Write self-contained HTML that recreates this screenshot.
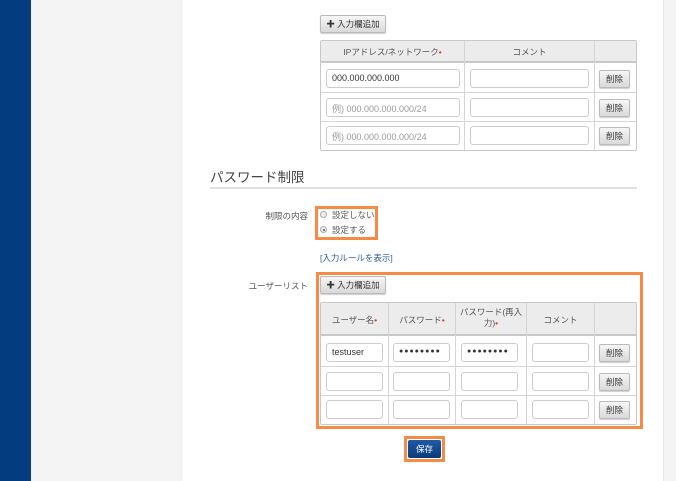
<!DOCTYPE html>
<html><head><meta charset="utf-8"><style>
*{box-sizing:border-box;margin:0;padding:0}
body{width:676px;height:481px;overflow:hidden;position:relative;font-family:"Liberation Sans","Noto Sans CJK JP",sans-serif;font-size:8.5px;color:#555;background:#fff}
.a{position:absolute}
.btn{position:absolute;border:1px solid #bbb;border-radius:2px;background:linear-gradient(#f6f6f6,#d9d9d9);font-size:8.5px;color:#333;text-align:center;box-shadow:0 1px 1px rgba(0,0,0,.2)}
.inp{position:absolute;border:1px solid #ccc;border-radius:3px;background:#fff;height:19px;font-size:9px;padding:3px 5px;color:#333}
.del{width:31px;height:18px;line-height:16px}
.th{position:absolute;background:#ececec;border-bottom:2px solid #c8c8c8}
.vl{position:absolute;width:1px;background:#d5d5d5}
.hl{position:absolute;height:1px;background:#d5d5d5}
.r{color:#d33}
.pw{font-size:7px;letter-spacing:1px;padding-top:4px}
</style></head><body>
<div class="a" style="left:0;top:0;width:31px;height:481px;background:#033d80"></div>
<div class="a" style="left:31px;top:0;width:152px;height:481px;background:#f4f4f4"></div>
<div class="a" style="left:663px;top:0;width:13px;height:481px;background:#f4f4f4;border-left:1px solid #e6e6e6"></div>

<div class="btn" style="left:320px;top:15px;width:66px;height:18px;line-height:16px">✚ 入力欄追加</div>
<div class="a" style="left:320px;top:40px;width:317px;height:111px;border:1px solid #c8c8c8;border-radius:2px"></div>
<div class="th" style="left:321px;top:41px;width:315px;height:22px"></div>
<div class="vl" style="left:464px;top:41px;height:109px"></div>
<div class="vl" style="left:594px;top:41px;height:109px"></div>
<div class="hl" style="left:321px;top:92px;width:315px"></div>
<div class="hl" style="left:321px;top:121px;width:315px"></div>
<div class="a" style="left:321px;top:46px;width:143px;text-align:center">IPアドレス/ネットワーク<span class="r">•</span></div>
<div class="a" style="left:465px;top:46px;width:129px;text-align:center">コメント</div>
<div class="inp" style="left:326px;top:69px;width:134px">000.000.000.000</div>
<div class="inp" style="left:326px;top:98px;width:134px;color:#999">例) 000.000.000.000/24</div>
<div class="inp" style="left:326px;top:126px;width:134px;color:#999">例) 000.000.000.000/24</div>
<div class="inp" style="left:470px;top:69px;width:119px"></div>
<div class="inp" style="left:470px;top:98px;width:119px"></div>
<div class="inp" style="left:470px;top:126px;width:119px"></div>
<div class="btn del" style="left:599px;top:70px">削除</div>
<div class="btn del" style="left:599px;top:99px">削除</div>
<div class="btn del" style="left:599px;top:127px">削除</div>

<div class="a" style="left:210px;top:166px;font-size:13.5px;color:#444">パスワード制限</div>
<div class="a" style="left:210px;top:187px;width:427px;height:2px;background:#e0e0e0"></div>

<div class="a" style="left:220px;top:210px;width:88px;text-align:right">制限の内容</div>
<div class="a" style="left:315px;top:206px;width:63px;height:34px;border:3px solid #f58b45"></div>
<div class="a" style="left:320px;top:211px;width:7px;height:7px;border:1px solid #aaa;border-radius:50%;background:#eee"></div>
<div class="a" style="left:332px;top:209px">設定しない</div>
<div class="a" style="left:320px;top:226px;width:7px;height:7px;border:1px solid #aaa;border-radius:50%;background:#eee"><div style="margin:1.5px;width:2px;height:2px;border-radius:50%;background:#555"></div></div>
<div class="a" style="left:332px;top:224px">設定する</div>

<div class="a" style="left:320px;top:252px;color:#2a5a9a">[入力ルールを表示]</div>

<div class="a" style="left:220px;top:280px;width:88px;text-align:right">ユーザーリスト</div>
<div class="a" style="left:316px;top:272px;width:327px;height:157px;border:3px solid #f58b45"></div>
<div class="btn" style="left:320px;top:276px;width:66px;height:18px;line-height:16px">✚ 入力欄追加</div>
<div class="a" style="left:320px;top:302px;width:317px;height:123px;border:1px solid #c8c8c8;border-radius:2px"></div>
<div class="th" style="left:321px;top:303px;width:315px;height:33px"></div>
<div class="vl" style="left:388px;top:303px;height:121px"></div>
<div class="vl" style="left:455px;top:303px;height:121px"></div>
<div class="vl" style="left:526px;top:303px;height:121px"></div>
<div class="vl" style="left:594px;top:303px;height:121px"></div>
<div class="hl" style="left:321px;top:366px;width:315px"></div>
<div class="hl" style="left:321px;top:395px;width:315px"></div>
<div class="a" style="left:321px;top:314px;width:67px;text-align:center">ユーザー名<span class="r">•</span></div>
<div class="a" style="left:389px;top:314px;width:66px;text-align:center">パスワード<span class="r">•</span></div>
<div class="a" style="left:456px;top:307px;width:70px;text-align:center;line-height:11px">パスワード(再入<br>力)<span class="r">•</span></div>
<div class="a" style="left:527px;top:314px;width:67px;text-align:center">コメント</div>

<div class="inp" style="left:326px;top:343px;width:57px">testuser</div>
<div class="inp pw" style="left:393px;top:343px;width:57px">●●●●●●●●</div>
<div class="inp pw" style="left:461px;top:343px;width:57px">●●●●●●●●</div>
<div class="inp" style="left:532px;top:343px;width:57px"></div>
<div class="btn del" style="left:599px;top:344px">削除</div>
<div class="inp" style="left:326px;top:372px;width:57px"></div>
<div class="inp" style="left:393px;top:372px;width:57px"></div>
<div class="inp" style="left:461px;top:372px;width:57px"></div>
<div class="inp" style="left:532px;top:372px;width:57px"></div>
<div class="btn del" style="left:599px;top:373px">削除</div>
<div class="inp" style="left:326px;top:400px;width:57px"></div>
<div class="inp" style="left:393px;top:400px;width:57px"></div>
<div class="inp" style="left:461px;top:400px;width:57px"></div>
<div class="inp" style="left:532px;top:400px;width:57px"></div>
<div class="btn del" style="left:599px;top:401px">削除</div>

<div class="a" style="left:404px;top:436px;width:41px;height:26px;border:3px solid #f58b45"></div>
<div class="a" style="left:408px;top:440px;width:33px;height:18px;border-radius:2px;background:linear-gradient(#1f5aa6,#0b3a7a);color:#fff;text-align:center;line-height:18px;font-size:8.5px">保存</div>
</body></html>
